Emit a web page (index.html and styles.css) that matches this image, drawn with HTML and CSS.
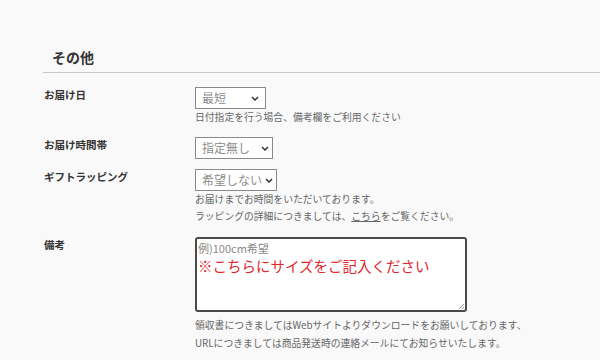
FILE: index.html
```html
<!DOCTYPE html>
<html lang="ja">
<head>
    <meta charset="UTF-8">
    <meta name="viewport" content="width=device-width, initial-scale=1">
    <title>その他</title>
    <link rel="stylesheet" href="styles.css">
</head>
<body>

    <section class="sonota">

        <h2 class="midashi">その他</h2>

        <div class="gyou">
            <p class="koumoku">お届け日</p>
            <div class="nyuryoku">
                <div class="sentaku haba-71">
                    <span>最短</span>
                    <svg class="yajirushi" width="8" height="5" viewBox="0 0 8 5"><path d="M1 1 L4 4 L7 1" fill="none" stroke="#333" stroke-width="1.5"/></svg>
                </div>
                <p class="chuui">日付指定を行う場合、備考欄をご利用ください</p>
            </div>
        </div>

        <div class="gyou">
            <p class="koumoku">お届け時間帯</p>
            <div class="nyuryoku">
                <div class="sentaku haba-78">
                    <span>指定無し</span>
                    <svg class="yajirushi" width="8" height="5" viewBox="0 0 8 5"><path d="M1 1 L4 4 L7 1" fill="none" stroke="#333" stroke-width="1.5"/></svg>
                </div>
            </div>
        </div>

        <div class="gyou">
            <p class="koumoku">ギフトラッピング</p>
            <div class="nyuryoku">
                <div class="sentaku haba-82">
                    <span>希望しない</span>
                    <svg class="yajirushi" width="8" height="5" viewBox="0 0 8 5"><path d="M1 1 L4 4 L7 1" fill="none" stroke="#333" stroke-width="1.5"/></svg>
                </div>
                <p class="chuui">お届けまでお時間をいただいております。</p>
                <p class="chuui">ラッピングの詳細につきましては、<a href="#">こちら</a>をご覧ください。</p>
            </div>
        </div>

        <div class="gyou">
            <p class="koumoku">備考</p>
            <div class="nyuryoku">
                <div class="bikou">
                    <p class="rei">例)100cm希望</p>
                    <p class="akaji">※こちらにサイズをご記入ください</p>
                    <svg class="tsumami" width="6" height="6" viewBox="0 0 6 6"><path d="M6 1 L1 6 M6 4 L4 6" stroke="#999" stroke-width="1"/></svg>
                </div>
                <p class="setsumei">領収書につきましてはWebサイトよりダウンロードをお願いしております、<br>URLにつきましては商品発送時の連絡メールにてお知らせいたします。</p>
            </div>
        </div>

    </section>

</body>
</html>
```

FILE: styles.css
```css
* {
    margin: 0;
    padding: 0;
    box-sizing: border-box;
}
body {
    font-family: "Noto Sans CJK JP", "Noto Sans", sans-serif;
    background-color: #f9f9f9;
    color: #333;
}
.sonota {
    padding: 47px 0 0 43px;
}
.midashi {
    font-size: 14px;
    line-height: 20px;
    font-weight: bold;
    padding: 0 0 5px 9px;
    border-bottom: 1px solid #c8c8c8;
    margin-bottom: 14px;
}
.gyou {
    display: grid;
    grid-template-columns: 152px 1fr;
    margin-bottom: 12px;
}
.gyou:nth-child(3) {
    margin-bottom: 10px;
}
.koumoku {
    font-size: 10.5px;
    line-height: 16px;
    font-weight: bold;
    padding-left: 1px;
}
.sentaku {
    display: flex;
    align-items: center;
    height: 22px;
    border: 1px solid #8a8a8a;
    background-color: #fff;
    padding: 0 5px 0 6px;
}
.sentaku span {
    font-size: 12px;
    line-height: 1;
    white-space: nowrap;
    color: #8c8c8c;
}
.yajirushi {
    flex-shrink: 0;
    margin-left: auto;
}
.haba-71 {
    width: 71px;
    padding-right: 6px;
}
.haba-78 {
    width: 78px;
    padding-right: 3px;
}
.haba-82 {
    width: 82px;
    padding-right: 3px;
}
.chuui {
    font-size: 9.8px;
    line-height: 16px;
    color: #666;
}
.gyou:nth-child(4) .chuui {
    line-height: 17px;
}
.chuui a {
    color: #666;
}
.bikou {
    display: flex;
    flex-direction: column;
    width: 272px;
    height: 75px;
    border: 2px solid #4a4a4a;
    border-radius: 3px;
    background-color: #fff;
    padding: 2px 1px 1px 1px;
}
.rei {
    font-size: 11px;
    line-height: 15px;
    color: #888;
}
.akaji {
    font-size: 14.5px;
    line-height: 18px;
    margin-top: 1px;
    color: #e0282d;
}
.tsumami {
    margin-top: auto;
    align-self: flex-end;
}
.setsumei {
    font-size: 9.8px;
    line-height: 18px;
    color: #666;
    margin-top: 4px;
}
```
